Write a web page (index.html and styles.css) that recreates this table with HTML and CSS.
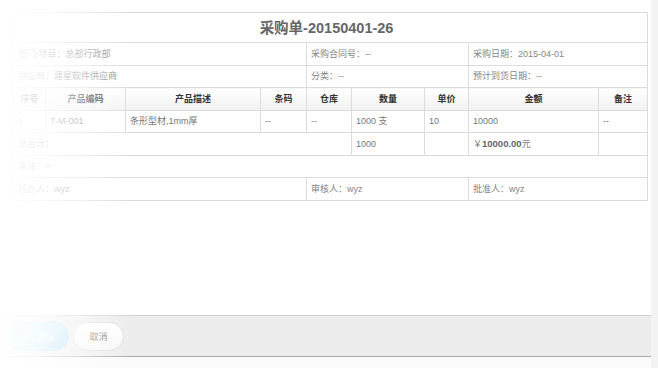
FILE: index.html
```html
<!DOCTYPE html>
<html lang="zh-CN">
<head>
<meta charset="utf-8">
<title>采购单</title>
<link rel="stylesheet" href="styles.css">
</head>
<body>
<div class="dialog">
  <div class="sheet">
    <table class="order">
      <colgroup>
        <col style="width:32px"><col style="width:80px"><col style="width:135px"><col style="width:46px"><col style="width:45px"><col style="width:73px"><col style="width:44px"><col style="width:130px"><col style="width:49px">
      </colgroup>
      <tr class="title-row"><td colspan="9">采购单-20150401-26</td></tr>
      <tr class="info-row">
        <td colspan="4">部门/项目：总部行政部</td>
        <td colspan="3">采购合同号：--</td>
        <td colspan="2">采购日期：2015-04-01</td>
      </tr>
      <tr class="info-row">
        <td colspan="4">供应商：建星软件供应商</td>
        <td colspan="3">分类：--</td>
        <td colspan="2">预计到货日期：--</td>
      </tr>
      <tr class="head-row">
        <th>序号</th><th>产品编码</th><th>产品描述</th><th>条码</th><th>仓库</th><th>数量</th><th>单价</th><th>金额</th><th>备注</th>
      </tr>
      <tr class="data-row">
        <td>1</td><td>T-M-001</td><td>条形型材,1mm厚</td><td>--</td><td>--</td><td>1000 支</td><td>10</td><td>10000</td><td>--</td>
      </tr>
      <tr class="data-row">
        <td colspan="5">总合计：</td><td>1000</td><td></td><td>￥<b>10000.00</b>元</td><td></td>
      </tr>
      <tr class="info-row"><td colspan="9">备注：--</td></tr>
      <tr class="info-row">
        <td colspan="4">经办人：wyz</td>
        <td colspan="3">审核人：wyz</td>
        <td colspan="2">批准人：wyz</td>
      </tr>
    </table>
  </div>
  <div class="footer">
    <button class="btn btn-primary">打印预览</button>
    <button class="btn btn-plain">取消</button>
  </div>
  <div class="bottom"></div>
  <div class="fade"></div>
</div>
</body>
</html>
```

FILE: styles.css
```css
html, body {
  margin: 0;
  padding: 0;
  background: #f3f3f3;
  font-family: "Liberation Sans", "Noto Sans CJK SC", sans-serif;
}

.dialog {
  position: relative;
  width: 651px;
  height: 368px;
  background: #fff;
  display: flex;
  flex-direction: column;
  overflow: hidden;
}

.sheet {
  flex: 1;
  padding: 12px 0 0 13px;
}

.order {
  border-collapse: collapse;
  table-layout: fixed;
  width: 635px;
  font-size: 9px;
  color: #777;
}

.order td, .order th {
  border: 1px solid #dcdcdc;
  height: 21.5px;
  padding: 0 4px;
  white-space: nowrap;
  overflow: hidden;
  text-align: left;
  line-height: 12px;
}

.title-row td {
  height: 29px;
  padding-right: 12px;
  text-align: center;
  font-size: 14.5px;
  font-weight: bold;
  color: #666;
  line-height: 18px;
}

.info-row td {
  color: #858585;
}

.head-row th {
  text-align: center;
  font-weight: bold;
  color: #333;
  background: linear-gradient(#fff, #f1f1f1);
}

.data-row td b {
  color: #666;
  font-size: 9.5px;
}

.footer {
  height: 42px;
  box-sizing: border-box;
  border-top: 1px solid #d3d3d3;
  border-bottom: 1px solid #a9a9a9;
  background: #ececec;
  display: flex;
  align-items: flex-start;
  gap: 4px;
  padding: 6px 0 0 5px;
}

.btn {
  height: 29px;
  border-radius: 15px;
  font-family: inherit;
  font-size: 9px;
  padding: 0;
  cursor: pointer;
}

.btn-primary {
  width: 64px;
  border: 1px solid #a9dbf2;
  background: linear-gradient(#c6e9f9, #a8dbf2);
  color: #fff;
}

.btn-plain {
  width: 51px;
  border: 1px solid #dedede;
  background: linear-gradient(#fff, #f6f6f6);
  color: #777;
}

.bottom {
  height: 11px;
  background: #fafafa;
}

/* soft white fade over the left edge of the dialog */
.fade {
  position: absolute;
  left: 0;
  top: 0;
  width: 130px;
  height: 100%;
  background: linear-gradient(to right, rgba(255,255,255,0.97), rgba(255,255,255,0.85) 30%, rgba(255,255,255,0.5) 65%, rgba(255,255,255,0));
  pointer-events: none;
}
```
